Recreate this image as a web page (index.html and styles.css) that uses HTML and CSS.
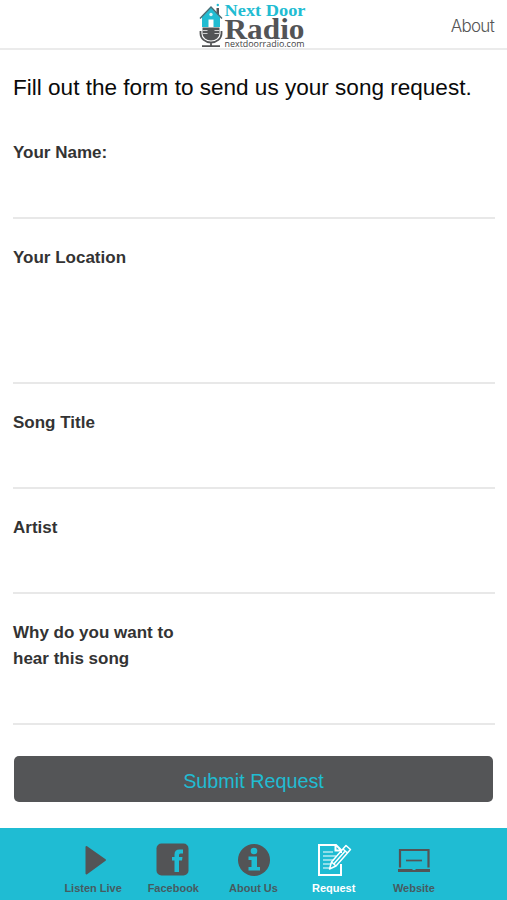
FILE: index.html
```html
<!DOCTYPE html>
<html lang="en">
<head>
<meta charset="utf-8">
<title>Next Door Radio</title>
<link rel="stylesheet" href="styles.css">
</head>
<body>
<header class="header">
  <svg class="logo" width="112" height="49" viewBox="0 0 112 49">
    <path d="M17.500 8h2.500v7h-2.500z" fill="#535456"/>
    <circle cx="18.800" cy="5" r="1.200" fill="#1fbcd3"/>
    <path d="M3 17 12 7.500 21 17v10H3z" fill="#21bcd2"/>
    <path d="M1 18.500 12 7 23 18.500" fill="none" stroke="#476d75" stroke-width="1.500"/>
    <path d="M9.500 27v-7.500h5V27z" fill="#fff"/><circle cx="12" cy="14.500" r="1.700" fill="#d9f4f7"/>
    <path d="M3.500 27.500h17v6a8.500 7 0 0 1-17 0z" fill="#535456"/>
    <path d="M3.500 30.500h5M15.500 30.500h5M3.500 33.500h5M15.500 33.500h5" stroke="#ddd" stroke-width=".9"/>
    <path d="M1.500 31v2.500a10.500 9 0 0 0 21 0V31M12 42v4M3 46.200h18" fill="none" stroke="#535456" stroke-width="1.800"/>
    <text class="logo-next" x="25.500" y="15.500" textLength="81" lengthAdjust="spacingAndGlyphs">Next Door</text>
    <text class="logo-radio" x="25.500" y="39" textLength="80" lengthAdjust="spacingAndGlyphs">Radio</text>
    <text class="logo-url" x="25.500" y="46.800" textLength="80" lengthAdjust="spacingAndGlyphs">nextdoorradio.com</text>
  </svg>
  <a class="about">About</a>
</header>
<main class="main">
  <h1 class="title">Fill out the form to send us your song request.</h1>
  <form class="form">
    <div class="field first"><label class="label">Your Name:</label></div>
    <div class="field tall"><label class="label">Your Location</label></div>
    <div class="field"><label class="label">Song Title</label></div>
    <div class="field"><label class="label">Artist</label></div>
    <div class="field reason"><label class="label">Why do you want to hear this song</label></div>
    <button class="submit" type="button">Submit Request</button>
  </form>
</main>
<nav class="tabs">
  <a class="tab"><svg class="icon" width="36" height="36" viewBox="0 0 36 36"><path d="M11.500 5 30 18 11.500 31.500z" fill="#535456" stroke="#535456" stroke-width="2" stroke-linejoin="round"/></svg><span class="name">Listen Live</span></a>
  <a class="tab"><svg class="icon" width="36" height="36" viewBox="0 0 36 36"><rect x="1.500" y="1.500" width="32" height="32" rx="5" fill="#535456"/><path d="M17 15h2.500v-2.500q0-5 5-5H28v4h-2.500q-1.500 0-1.500 1.500v2h3.500l-.5 3.500h-3V30h-4.500V18.500H17z" fill="#1fbcd3"/></svg><span class="name">Facebook</span></a>
  <a class="tab"><svg class="icon" width="36" height="36" viewBox="0 0 36 36"><circle cx="18" cy="18" r="16" fill="#535456"/><circle cx="18" cy="9" r="3.300" fill="#1fbcd3"/><path d="M12.500 14.500h8.500v10.500h3v3.500H12.500V25h3v-7h-3z" fill="#1fbcd3"/></svg><span class="name">About Us</span></a>
  <a class="tab active"><svg class="icon" width="36" height="36" viewBox="0 0 36 36" fill="none" stroke="#fff"><path d="M25 11V8l-5-5H3v30h22V22M19.500 3v5.500H25" stroke-width="2"/><path d="M7 10h10M7 14h13M7 18h11M7 22h8M7 26h6" stroke-width="1.200"/><path d="m13.500 27 2-7L30 3.500l4.500 4L20 24zM27 7l4.500 4M15.500 20l4.500 4M17.800 22 29.200 9" stroke-width="1.500" stroke-linejoin="round"/></svg><span class="name">Request</span></a>
  <a class="tab"><svg class="icon" width="36" height="36" viewBox="0 0 36 36" fill="none" stroke="#535456"><path d="M4 25.500V8h28.500v17.500" stroke-width="2.200"/><path d="M2 28.500h32" stroke-width="3"/><path d="M10 18.500h16" stroke-width="1.700"/><path d="M16.500 27.500h3" stroke="#1fbcd3"/></svg><span class="name">Website</span></a>
</nav>
</body>
</html>
```
FILE: styles.css
```css
* { box-sizing: border-box; }
body {
  margin: 0;
  height: 900px;
  display: flex;
  flex-direction: column;
  overflow: hidden;
  background: #fff;
  font-family: "Liberation Sans", Arial, sans-serif;
}
.header {
  height: 50px;
  flex: none;
  display: grid;
  grid-template-columns: 1fr 112px 1fr;
  border-bottom: 2px solid #ebebeb;
}
.logo { grid-column: 2; display: block; margin-left: 1px; overflow: visible; }
.logo-next { font: bold 17.500px "Liberation Serif", serif; fill: #21bcd2; }
.logo-radio { font: bold 30px "Liberation Serif", serif; fill: #535456; }
.logo-url { font: 9.500px "Open Sans", sans-serif; fill: #444; }
.about {
  justify-self: end;
  margin: 14px 13px 0 0;
  font: 300 17px/24px Inter, Roboto, sans-serif;
  letter-spacing: -0.700px;
  color: #555;
}
.main { flex: 1; padding: 0 12.500px 0 13px; }
.title {
  margin: 24px 0 0;
  font-size: 22.550px;
  font-weight: 400;
  line-height: 28px;
  white-space: nowrap;
  color: #0a0a0a;
}
.field {
  height: 105px;
  padding-top: 26px;
  border-bottom: 2px solid #e8e8e8;
}
.first { height: 117px; padding-top: 38px; }
.tall { height: 165px; }
.reason { height: 131px; }
.label {
  display: block;
  width: 175px;
  font-size: 17px;
  font-weight: 700;
  line-height: 26px;
  color: #333;
}
.submit {
  display: block;
  width: 479px;
  height: 46px;
  margin: 31px 0 0 1px;
  padding: 4px 0 0;
  border: 0;
  border-radius: 5px;
  background: #545557;
  color: #21bcd2;
  font: 19.800px/24px "Liberation Sans", Arial, sans-serif;
}
.tabs {
  height: 72px;
  flex: none;
  display: flex;
  justify-content: center;
  background: #1fbcd3;
}
.tab {
  width: 80.200px;
  padding-top: 14px;
  display: flex;
  flex-direction: column;
  align-items: center;
  color: #465b61;
}
.icon { display: block; }
.name {
  margin-top: 3px;
  font-size: 11px;
  font-weight: 700;
  line-height: 14px;
  white-space: nowrap;
}
.active { color: #fff; }
```
